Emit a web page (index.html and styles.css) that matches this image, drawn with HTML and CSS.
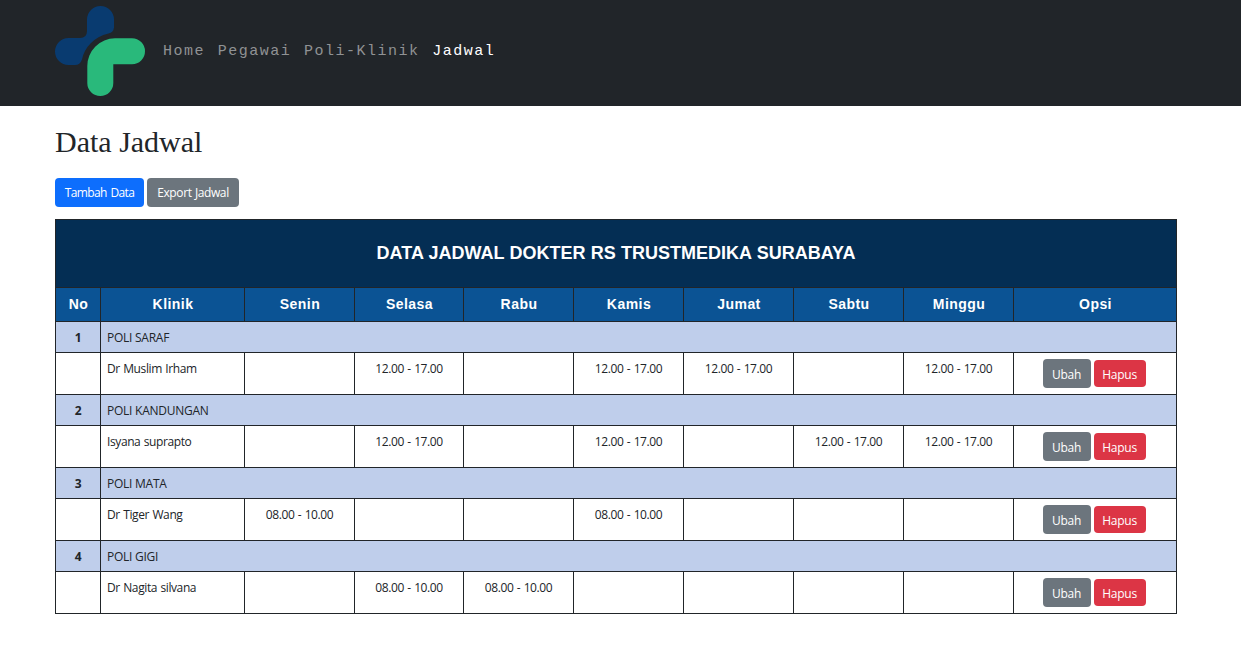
FILE: index.html
```
<!DOCTYPE html>
<html lang="id">
<head>
<meta charset="utf-8">
<title>Data Jadwal</title>
<link rel="stylesheet" href="styles.css">
</head>
<body>
<nav class="navbar">
  <svg class="logo" width="90" height="90" viewBox="0 0 90 90">
    <path fill="#093b70" d="M45.500 0A13.500 13.500 0 0 1 59 13.500V21.500Q58.500 26.500 53.500 27.500C39 31 29.500 41 27 53.500Q25 59 20 59H13.500A13.500 13.500 0 0 1 13.500 32H25Q32 32 32 25V13.500A13.500 13.500 0 0 1 45.500 0Z"/>
    <path fill="#29b97b" d="M60 32.300H77A13 13 0 0 1 77 58.300H58.300V77A13 13 0 0 1 32.300 77V60A27.700 27.700 0 0 1 60 32.300Z"/>
  </svg>
  <ul class="nav-list">
    <li><a class="nav-link">Home</a></li>
    <li><a class="nav-link">Pegawai</a></li>
    <li><a class="nav-link">Poli-Klinik</a></li>
    <li><a class="nav-link active">Jadwal</a></li>
  </ul>
</nav>
<main class="container">
  <h1 class="title">Data Jadwal</h1>
  <div class="actions">
    <a class="btn btn-primary">Tambah Data</a>
    <a class="btn btn-secondary">Export Jadwal</a>
  </div>
  <table class="schedule">
    <colgroup><col class="c-no"><col class="c-klinik"><col class="c-day"><col class="c-selasa"><col class="c-day"><col class="c-day"><col class="c-day"><col class="c-day"><col class="c-day"><col class="c-opsi"></colgroup>
    <thead>
      <tr class="banner"><th colspan="10"><span class="banner-text">DATA JADWAL DOKTER RS TRUSTMEDIKA SURABAYA</span></th></tr>
      <tr class="heads"><th>No</th><th>Klinik</th><th>Senin</th><th>Selasa</th><th>Rabu</th><th>Kamis</th><th>Jumat</th><th>Sabtu</th><th>Minggu</th><th>Opsi</th></tr>
    </thead>
    <tbody>
      <tr class="poli"><th>1</th><td colspan="9">POLI SARAF</td></tr>
      <tr class="doctor"><td></td><td class="name">Dr Muslim Irham</td><td></td><td>12.00 - 17.00</td><td></td><td>12.00 - 17.00</td><td>12.00 - 17.00</td><td></td><td>12.00 - 17.00</td><td><div class="options"><a class="btn btn-secondary">Ubah</a><button class="btn btn-danger">Hapus</button></div></td></tr>
      <tr class="poli"><th>2</th><td colspan="9">POLI KANDUNGAN</td></tr>
      <tr class="doctor"><td></td><td class="name">Isyana suprapto</td><td></td><td>12.00 - 17.00</td><td></td><td>12.00 - 17.00</td><td></td><td>12.00 - 17.00</td><td>12.00 - 17.00</td><td><div class="options"><a class="btn btn-secondary">Ubah</a><button class="btn btn-danger">Hapus</button></div></td></tr>
      <tr class="poli"><th>3</th><td colspan="9">POLI MATA</td></tr>
      <tr class="doctor"><td></td><td class="name">Dr Tiger Wang</td><td>08.00 - 10.00</td><td></td><td></td><td>08.00 - 10.00</td><td></td><td></td><td></td><td><div class="options"><a class="btn btn-secondary">Ubah</a><button class="btn btn-danger">Hapus</button></div></td></tr>
      <tr class="poli"><th>4</th><td colspan="9">POLI GIGI</td></tr>
      <tr class="doctor"><td></td><td class="name">Dr Nagita silvana</td><td></td><td>08.00 - 10.00</td><td>08.00 - 10.00</td><td></td><td></td><td></td><td></td><td><div class="options"><a class="btn btn-secondary">Ubah</a><button class="btn btn-danger">Hapus</button></div></td></tr>
    </tbody>
  </table>
</main>
</body>
</html>
```
FILE: styles.css
```
* { box-sizing: border-box; }
body {
  margin: 0;
  background: #fff;
  color: #212529;
  font: 12px/18px "Open Sans", "Noto Sans", sans-serif;
  letter-spacing: -0.4px;
  word-spacing: 0.7px;
}
.navbar {
  display: flex;
  align-items: flex-start;
  height: 106px;
  padding: 6px 55px;
  background: #212529;
}
.nav-list {
  display: flex;
  gap: 12.7px;
  margin: 0;
  padding: 34px 0 0 18px;
  list-style: none;
}
.nav-link {
  color: #909294;
  font: 15px/24px "Liberation Mono", monospace;
  letter-spacing: 1.5px;
}
.nav-link.active { color: #fff; }
.container { padding: 18px 55px 0; }
.title {
  margin: 0 0 18px;
  font: 400 30px/36px "Liberation Serif", serif;
  letter-spacing: 0;
  word-spacing: 0;
}
.actions { display: flex; gap: 3px; margin-bottom: 12px; }
.btn {
  height: 29px;
  padding: 6px 0 5px;
  border: 0;
  border-radius: 4px;
  color: #fff;
  font: 12px/18px "Open Sans", "Noto Sans", sans-serif;
  letter-spacing: -0.4px;
  word-spacing: 0.7px;
  text-align: center;
  white-space: nowrap;
}
.btn-primary { background: #0d6efd; width: 89px; letter-spacing: -0.6px; word-spacing: 1px; }
.btn-secondary { background: #6c757d; width: 92px; }
.btn-danger { background: #dc3545; }
.schedule {
  width: 1122px;
  table-layout: fixed;
  border-collapse: separate;
  border-spacing: 0;
  border: solid #212529;
  border-width: 1px 0 0 1px;
}
.c-no { width: 45px; }
.c-klinik { width: 144px; }
.c-day { width: 110px; }
.c-selasa { width: 109px; }
.c-opsi { width: 163px; }
.schedule th, .schedule td {
  padding: 6px;
  border: solid #212529;
  border-width: 0 1px 1px 0;
  text-align: center;
  vertical-align: top;
}
.schedule .banner th {
  height: 68px;
  padding: 0 0 2px;
  vertical-align: middle;
  background: #042e54;
  color: #fff;
  font: bold 18px/22px "Liberation Sans", Arial, sans-serif;
  letter-spacing: 0;
  word-spacing: 0.3px;
}
.schedule .heads th {
  height: 34px;
  padding: 0 0 2px 1px;
  vertical-align: middle;
  background: #0b5394;
  color: #fff;
  font: bold 14px/18px "Liberation Sans", Arial, sans-serif;
  letter-spacing: 0.45px;
}
.poli { background: #bfceeb; }
.schedule .poli th, .schedule .poli td { height: 31px; padding: 7px 6px 5px; }
.schedule .poli td { text-align: left; letter-spacing: -0.25px; word-spacing: 0; }
.schedule .doctor td { height: 42px; padding-top: 7px; }
.schedule .doctor .name { text-align: left; }
.options {
  display: flex;
  justify-content: center;
  align-items: center;
  gap: 3px;
  height: 29px;
  margin: -1px 2px 0 0;
}
.options .btn { padding: 7px 0 4px; letter-spacing: -0.25px; }
.options .btn-secondary { width: 48px; }
.options .btn-danger { width: 52px; height: 27px; padding: 6px 0 3px; }
```
